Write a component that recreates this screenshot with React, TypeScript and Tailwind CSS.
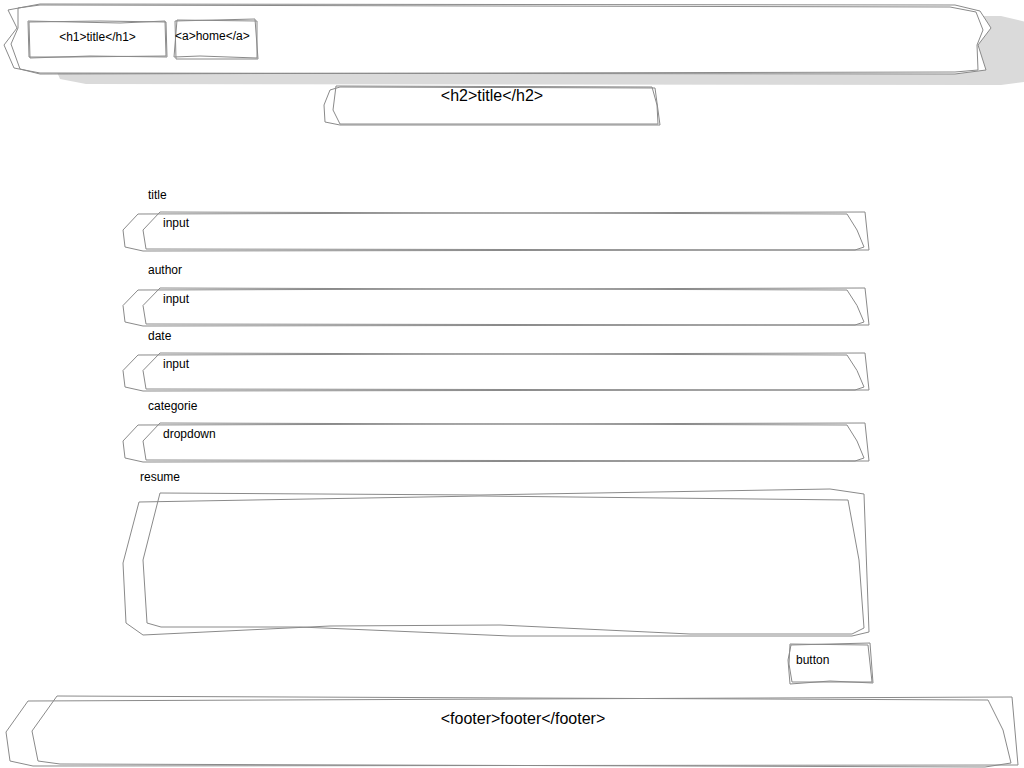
import React from 'react';

type Pt = [number, number];

const toPath = (pts: Pt[]) => 'M' + pts.map(([a, b]) => `${a},${b}`).join(' L') + ' Z';

interface SketchProps {
    x: number;
    y: number;
    w: number;
    h: number;
    shapes: Pt[][];
    shadow?: Pt[];
}

// hand drawn outline, drawn in page coordinates over the box it sits in
function Sketch({ x, y, w, h, shapes, shadow }: SketchProps) {
    return (
        <svg
            className="absolute left-0 top-0 overflow-visible pointer-events-none"
            width={w}
            height={h}
            viewBox={`${x} ${y} ${w} ${h}`}
        >
            {shadow && <path d={toPath(shadow)} fill="#dadada" />}
            {shapes.map((s, i) => (
                <path key={i} d={toPath(s)} fill={i === 0 ? '#fff' : 'none'} stroke="#8a8a8a" strokeWidth={1} />
            ))}
        </svg>
    );
}

const inputShapes = (x: number, y: number, h: number): Pt[][] => {
    const m = h / 2 - 1;
    const a: Pt[] = [[15, 3], [742, 1], [746, h - 1], [20, h], [2, h - 4], [0, m]];
    const b: Pt[] = [[37, 1], [724, 3], [734, m], [741, h - 4], [732, h - 1], [23, h - 2], [20, m]];
    return [a, b].map((s) => s.map(([px, py]) => [px + x, py + y] as Pt));
};

const headerOuter: Pt[] = [[40, 4], [955, 5], [980, 11], [991, 28], [978, 45], [986, 70], [955, 74], [40, 73], [14, 68], [4, 45], [17, 28], [8, 10]];
const headerInner: Pt[] = [[18, 8], [40, 5], [950, 7], [976, 12], [983, 30], [977, 45], [978, 70], [955, 72], [40, 74], [20, 69], [11, 44], [18, 28]];
const headerShadow: Pt[] = headerOuter.map(([a, b]) => [a + 46, b + 11] as Pt);

interface FieldProps {
    label: string;
    text: string;
    labelTop: number;
    boxTop: number;
    y: number;
    h: number;
}

function Field({ label, text, labelTop, boxTop, y, h }: FieldProps) {
    return (
        <div>
            <div className="ml-[148px] text-[12px] leading-[14px]" style={{ marginTop: labelTop }}>
                {label}
            </div>
            <div className="relative ml-[123px] w-[746px]" style={{ marginTop: boxTop, height: h }}>
                <Sketch x={123} y={y} w={746} h={h} shapes={inputShapes(123, y, h)} />
                <span className="relative block pl-[40px] pt-[5px] text-[12px] leading-[14px]">{text}</span>
            </div>
        </div>
    );
}

export default function App() {
    return (
        <div className="w-[1024px] h-[768px] overflow-hidden bg-white text-black font-['Liberation_Sans',Arial,sans-serif]">
            <div className="pt-[4px] pl-[4px]">
                <header className="relative w-[987px] h-[71px]">
                    <Sketch x={4} y={4} w={987} h={71} shapes={[headerOuter, headerInner]} shadow={headerShadow} />
                    <div className="relative flex items-start gap-[6px] pt-[17px] pl-[24px]">
                        <div className="relative w-[139px] h-[37px] pt-[9px] text-center text-[12px] leading-[14px]">
                            <Sketch
                                x={28}
                                y={21}
                                w={139}
                                h={37}
                                shapes={[
                                    [[29, 22], [100, 21], [166, 22], [167, 57], [90, 56], [30, 58]],
                                    [[28, 21], [120, 23], [165, 21], [166, 56], [70, 57], [29, 57]],
                                ]}
                            />
                            <span className="relative">{'<h1>title</h1>'}</span>
                        </div>
                        <div className="relative w-[85px] h-[40px] -mt-[2px] pt-[10px] pl-[2px] text-[12px] leading-[14px]">
                            <Sketch
                                x={173}
                                y={19}
                                w={85}
                                h={40}
                                shapes={[
                                    [[175, 21], [255, 19], [258, 59], [176, 59]],
                                    [[177, 20], [257, 21], [257, 58], [200, 56], [174, 57]],
                                ]}
                            />
                            <span className="relative">{'<a>home</a>'}</span>
                        </div>
                    </div>
                </header>
            </div>

            <div className="relative mt-[11px] ml-[324px] w-[336px] h-[39px] pt-[1px] text-center text-[16px] leading-[18px]">
                <Sketch
                    x={324}
                    y={86}
                    w={336}
                    h={39}
                    shapes={[
                        [[340, 87], [655, 88], [660, 125], [340, 125], [325, 122], [324, 105], [330, 90]],
                        [[336, 86], [652, 87], [657, 105], [658, 124], [340, 124], [333, 110]],
                    ]}
                />
                <span className="relative">{'<h2>title</h2>'}</span>
            </div>

            <div className="mt-[63px]">
                <Field label="title" text="input" labelTop={0} boxTop={9} y={211} h={40} />
                <Field label="author" text="input" labelTop={12} boxTop={10} y={287} h={39} />
                <Field label="date" text="input" labelTop={3} boxTop={9} y={352} h={39} />
                <Field label="categorie" text="dropdown" labelTop={8} boxTop={9} y={422} h={40} />

                <div className="ml-[140px] mt-[8px] text-[12px] leading-[14px]">resume</div>
                <div className="relative ml-[123px] mt-[5px] w-[746px] h-[147px]">
                    <Sketch
                        x={0}
                        y={0}
                        w={746}
                        h={147}
                        shapes={[
                            [[37, 4], [357, 6], [707, 0], [741, 5], [746, 143], [729, 147], [387, 147], [177, 138], [38, 138], [24, 134], [20, 71]],
                            [[16, 13], [357, 7], [725, 11], [736, 71], [741, 139], [729, 145], [567, 145], [377, 136], [207, 137], [20, 146], [3, 134], [0, 74]],
                        ]}
                    />
                </div>

                <div className="relative ml-[788px] mt-[7px] w-[85px] h-[41px] pt-[10px] pl-[8px] text-[12px] leading-[14px]">
                    <Sketch
                        x={788}
                        y={643}
                        w={85}
                        h={41}
                        shapes={[
                            [[791, 645], [870, 643], [873, 683], [830, 681], [790, 684], [788, 660]],
                            [[790, 644], [868, 645], [872, 682], [792, 682], [789, 664]],
                        ]}
                    />
                    <span className="relative">button</span>
                </div>
            </div>

            <footer className="relative ml-[6px] mt-[11px] w-[1012px] h-[73px] pt-[15px] pl-[22px] text-center text-[16px] leading-[18px]">
                <Sketch
                    x={6}
                    y={695}
                    w={1012}
                    h={73}
                    shapes={[
                        [[28, 701], [1012, 697], [1018, 765], [33, 766], [10, 761], [6, 732]],
                        [[57, 696], [988, 700], [1003, 730], [1011, 763], [985, 767], [60, 764], [38, 761], [32, 731]],
                    ]}
                />
                <span className="relative">{'<footer>footer</footer>'}</span>
            </footer>
        </div>
    );
}
